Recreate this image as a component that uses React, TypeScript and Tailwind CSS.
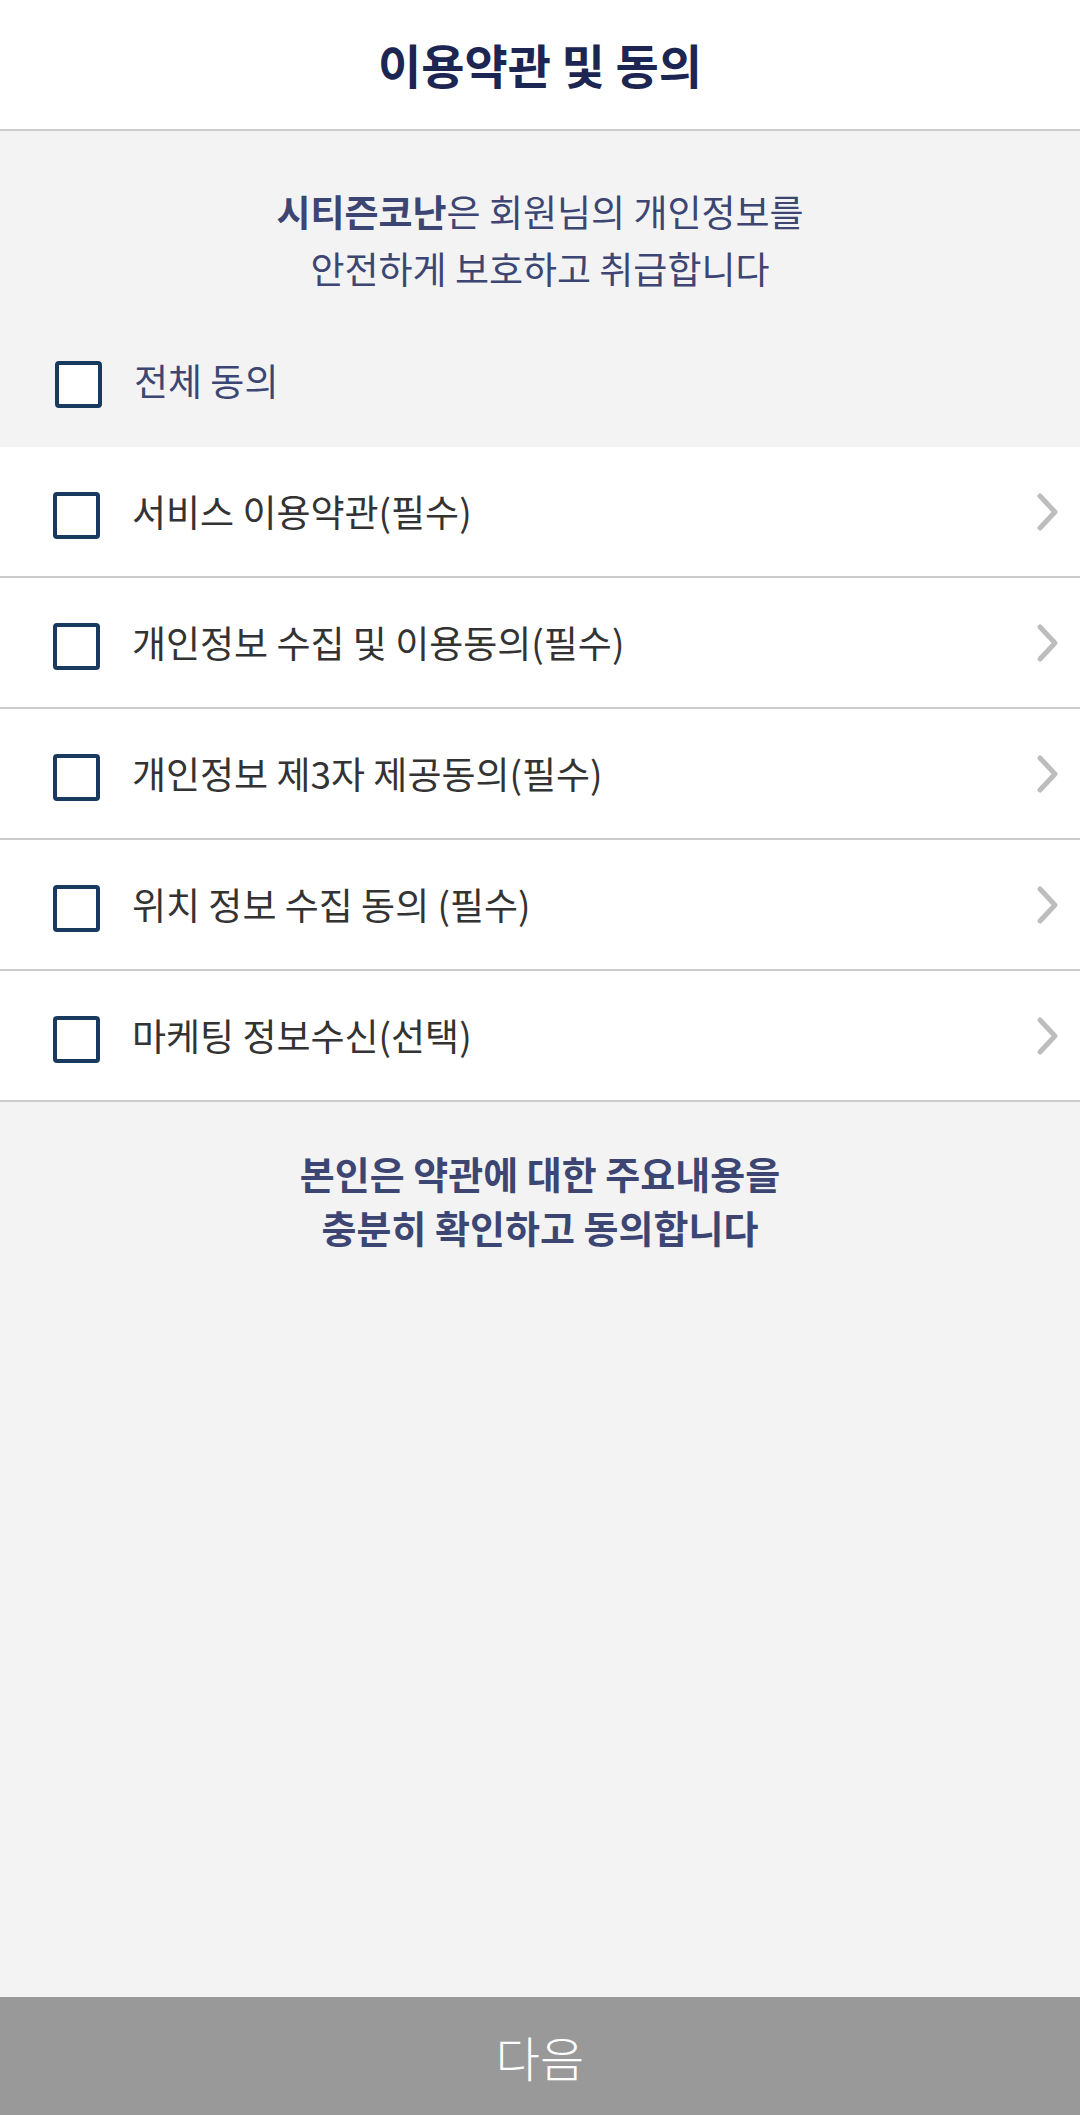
import React from "react";

const FONT = { fontFamily: '"Noto Sans CJK KR", "Noto Sans", sans-serif' };

type TermItem = {
  label: string;
};

const terms: TermItem[] = [
  { label: "서비스 이용약관(필수)" },
  { label: "개인정보 수집 및 이용동의(필수)" },
  { label: "개인정보 제3자 제공동의(필수)" },
  { label: "위치 정보 수집 동의 (필수)" },
  { label: "마케팅 정보수신(선택)" },
];

const CheckBox = () => (
  <span className="mt-[8px] block h-[47px] w-[47px] shrink-0 rounded-[4px] border-[4px] border-[#183a5e] bg-white" />
);

const Chevron = () => (
  <svg width="24" height="40" viewBox="0 0 24 40" fill="none">
    <path
      d="M4 4 L19 20 L4 36"
      stroke="#bdbdbd"
      strokeWidth="5"
      strokeLinecap="round"
      strokeLinejoin="round"
    />
  </svg>
);

const App = () => {
  return (
    <div className="flex h-screen w-full flex-col bg-[#f3f3f3]" style={FONT}>
      <header className="flex h-[131px] shrink-0 items-center justify-center border-b-2 border-[#cccccc] bg-white">
        <h1 className="text-[47px] font-bold text-[#1d2552]">이용약관 및 동의</h1>
      </header>

      <section className="flex h-[316px] shrink-0 flex-col">
        <p className="pt-[52px] text-center text-[37px] leading-[57px] text-[#3d4673]">
          <span className="font-bold">시티즌코난</span>은 회원님의 개인정보를
          <br />
          안전하게 보호하고 취급합니다
        </p>
        <label className="mt-[56px] flex items-center gap-[32px] pl-[55px]">
          <CheckBox />
          <span className="text-[37px] text-[#3d4673]">전체 동의</span>
        </label>
      </section>

      <ul className="shrink-0 bg-white">
        {terms.map((t) => (
          <li
            key={t.label}
            className="flex h-[131px] items-center border-b-2 border-[#cccccc] pl-[53px] pr-[20px]"
          >
            <CheckBox />
            <span className="ml-[32px] flex-1 text-[37px] text-[#333333]">{t.label}</span>
            <Chevron />
          </li>
        ))}
      </ul>

      <div className="flex-1">
        <p className="pt-[44px] text-center text-[38px] font-bold leading-[54px] text-[#3d4673]">
          본인은 약관에 대한 주요내용을
          <br />
          충분히 확인하고 동의합니다
        </p>
      </div>

      <button className="flex h-[118px] shrink-0 items-center justify-center bg-[#999999] text-[48px] font-light text-white">
        다음
      </button>
    </div>
  );
};

export default App;
